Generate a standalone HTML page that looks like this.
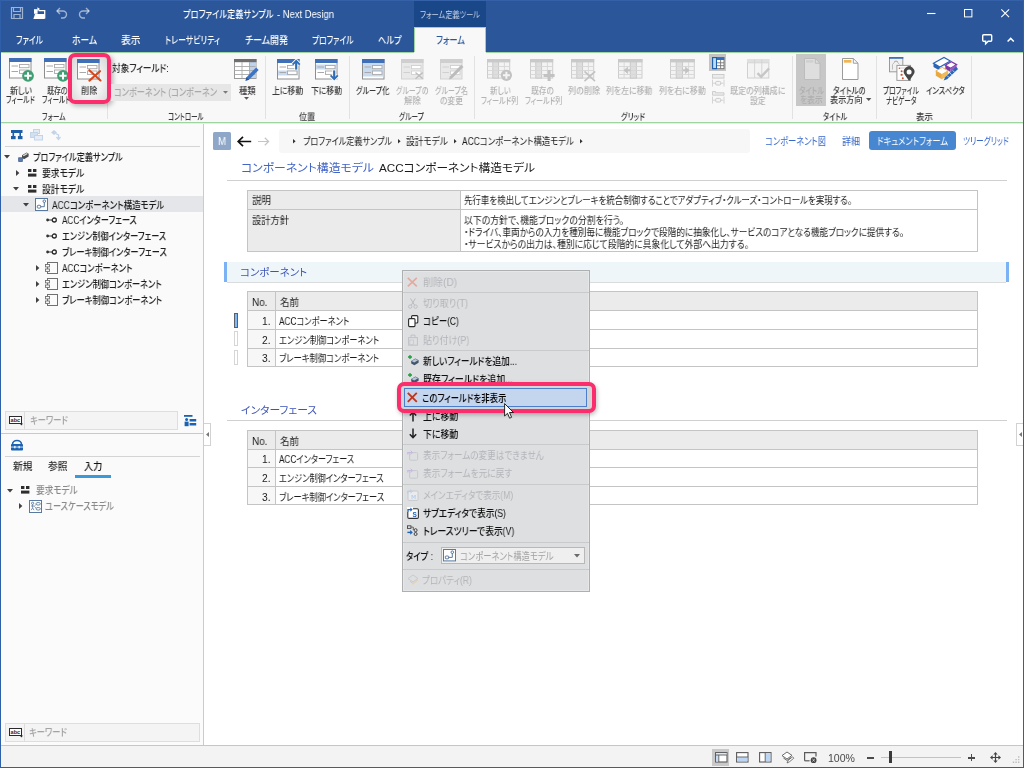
<!DOCTYPE html>
<html lang="ja"><head><meta charset="utf-8"><title>Next Design</title>
<style>
html,body{margin:0;padding:0;background:#fff;}
body{width:1024px;height:768px;overflow:hidden;font-family:"Liberation Sans","Noto Sans CJK JP",sans-serif;}
#app{position:relative;width:1024px;height:768px;overflow:hidden;background:#fff;}
#app div,#app svg,#app span.t{position:absolute;}
#app .g{left:0;top:0;width:0;height:0;}
span.t{white-space:nowrap;line-height:14px;height:14px;font-feature-settings:"palt";}
span.t>span{display:inline-block;transform-origin:0 50%;white-space:nowrap;will-change:transform;}
svg{overflow:visible;}
</style></head>
<body><div id="app">
<div class="g titlebar">
<div style="left:0px;top:0px;width:1024px;height:52px;background:#2b579a;"></div>
<div style="left:0px;top:0px;width:1024px;height:1px;background:#3461a8;"></div>
<div style="left:414px;top:1px;width:72px;height:26px;background:#1a4788;"></div>
<span class="t" style="left:182.5px;top:7.50px;font-size:10.27px;color:#ffffff;font-weight:500;"><span style="transform:scaleX(0.8003)">プロファイル定義サンプル</span></span>
<span class="t" style="left:277px;top:7.50px;font-size:10.27px;color:#ffffff;font-weight:500;"><span style="transform:scaleX(0.9166)">- Next Design</span></span>
<span class="t" style="left:420px;top:8.40px;font-size:8.88px;color:#c9d5ea;font-weight:400;"><span style="transform:scaleX(0.8098)">フォーム定義ツール</span></span>
<svg style="left:11px;top:7px;" width="12" height="12" viewBox="0 0 12 12"><path d="M0.5 0.5h11v11h-11z M2.5 0.5v4h7v-4 M3 11.5v-4h6v4" fill="none" stroke="rgba(255,255,255,.55)" stroke-width="1.2"/></svg>
<svg style="left:33.2px;top:6.6px;" width="13" height="13" viewBox="0 0 13 13"><path d="M5.5 3.6h6.2v8" fill="none" stroke="#fff" stroke-width="1.3"/><path d="M0.4 12l1.6-5h9.6v5z" fill="#fff"/><rect x="1" y="2.2" width="3.6" height="4.6" fill="#fff"/><path d="M4.4 0.2l2.6 1.9-2.6 1.9z" fill="#fff"/></svg>
<svg style="left:56px;top:7px;" width="12" height="12" viewBox="0 0 12 12"><path d="M1 4h6a3.5 3.5 0 0 1 0 7h-2" fill="none" stroke="rgba(255,255,255,.55)" stroke-width="1.4"/><path d="M4 1l-3 3 3 3" fill="none" stroke="rgba(255,255,255,.55)" stroke-width="1.4"/></svg>
<svg style="left:78px;top:7px;" width="12" height="12" viewBox="0 0 12 12"><path d="M11 4h-6a3.5 3.5 0 0 0 0 7h2" fill="none" stroke="rgba(255,255,255,.55)" stroke-width="1.4"/><path d="M8 1l3 3-3 3" fill="none" stroke="rgba(255,255,255,.55)" stroke-width="1.4"/></svg>
<svg style="left:927px;top:9px;" width="10" height="10" viewBox="0 0 10 10"><path d="M0 4.5h8.5" stroke="#fff" stroke-width="1.1"/></svg>
<svg style="left:964px;top:9px;" width="9" height="9" viewBox="0 0 9 9"><rect x="0.5" y="0.5" width="7.4" height="7.4" fill="none" stroke="#fff" stroke-width="1"/></svg>
<svg style="left:1001px;top:9px;" width="9" height="9" viewBox="0 0 9 9"><path d="M0.3 0.3l7.8 7.8M8.1 0.3l-7.8 7.8" stroke="#fff" stroke-width="1.1"/></svg>
</div>
<div class="g tabs">
<span class="t" style="left:16px;top:34.00px;font-size:10.27px;color:#ffffff;font-weight:500;"><span style="transform:scaleX(0.7592)">ファイル</span></span>
<span class="t" style="left:72px;top:34.00px;font-size:10.27px;color:#ffffff;font-weight:500;"><span style="transform:scaleX(0.8511)">ホーム</span></span>
<span class="t" style="left:120.5px;top:34.00px;font-size:10.27px;color:#ffffff;font-weight:500;"><span style="transform:scaleX(0.9498)">表示</span></span>
<span class="t" style="left:165px;top:34.00px;font-size:10.27px;color:#ffffff;font-weight:500;"><span style="transform:scaleX(0.7748)">トレーサビリティ</span></span>
<span class="t" style="left:244.5px;top:34.00px;font-size:10.27px;color:#ffffff;font-weight:500;"><span style="transform:scaleX(0.8717)">チーム開発</span></span>
<span class="t" style="left:311.5px;top:34.00px;font-size:10.27px;color:#ffffff;font-weight:500;"><span style="transform:scaleX(0.7543)">プロファイル</span></span>
<span class="t" style="left:377.5px;top:34.00px;font-size:10.27px;color:#ffffff;font-weight:500;"><span style="transform:scaleX(0.7979)">ヘルプ</span></span>
<div style="left:414px;top:27px;width:72px;height:26px;background:#f8f8f8;border:1px solid #9fd39f;border-bottom:none;box-sizing:border-box;"></div>
<span class="t" style="left:435.5px;top:34.40px;font-size:10.27px;color:#2b579a;font-weight:500;"><span style="transform:scaleX(0.8052)">フォーム</span></span>
<svg style="left:982px;top:33.8px;" width="11" height="11" viewBox="0 0 11 11"><path d="M1.6 0.8h7.2a0.9 0.9 0 0 1 0.9 0.9v4.6a0.9 0.9 0 0 1-0.9 0.9h-2.6l-2.6 2.6v-2.6h-2a0.9 0.9 0 0 1-0.9-0.9v-4.6a0.9 0.9 0 0 1 0.9-0.9z" fill="none" stroke="#fff" stroke-width="1.4"/></svg>
<svg style="left:1007px;top:37px;" width="8" height="6" viewBox="0 0 8 6"><path d="M0.6 4.6l3.1-3.2 3.1 3.2" fill="none" stroke="#fff" stroke-width="1.5"/></svg>
</div>
<div class="g ribbon">
<div style="left:0px;top:52px;width:1024px;height:71px;background:#f8f8f8;"></div>
<div style="left:0px;top:52px;width:414px;height:1px;background:#9fd39f;"></div>
<div style="left:486px;top:52px;width:538px;height:1px;background:#9fd39f;"></div>
<div style="left:0px;top:122px;width:1024px;height:1px;background:#9fd39f;"></div>
<div style="left:0px;top:123px;width:1024px;height:1px;background:#e3efe3;"></div>
<div style="left:107px;top:55.5px;width:1px;height:63.5px;background:#e2e2e2;"></div>
<div style="left:265px;top:55.5px;width:1px;height:63.5px;background:#e2e2e2;"></div>
<div style="left:349px;top:55.5px;width:1px;height:63.5px;background:#e2e2e2;"></div>
<div style="left:474px;top:55.5px;width:1px;height:63.5px;background:#e2e2e2;"></div>
<div style="left:792px;top:55.5px;width:1px;height:63.5px;background:#e2e2e2;"></div>
<div style="left:876px;top:55.5px;width:1px;height:63.5px;background:#e2e2e2;"></div>
<div style="left:971px;top:55.5px;width:1px;height:63.5px;background:#e2e2e2;"></div>
<svg style="left:9px;top:57.6px;" width="26" height="24" viewBox="0 0 26 24"><rect x="0.5" y="0.5" width="21.5" height="19.5" fill="#ffffff" stroke="#8e8e8e" stroke-width="1"/><rect x="0" y="0" width="22.5" height="4" fill="#3f6fb6"/><path d="M2.5 8h6.5M2.5 13.5h6.5" stroke="#a8a8a8" stroke-width="1"/><rect x="10.5" y="6.5" width="9.5" height="3.2" fill="#ffffff" stroke="#a8a8a8" stroke-width="0.9"/><rect x="10.5" y="12" width="9.5" height="3.4" fill="#ffffff" stroke="#a8a8a8" stroke-width="0.9"/><circle cx="19" cy="17.8" r="5.9" fill="#3f9f72"/><path d="M15.341999999999999 17.8h7.316000000000001M19 14.142v7.316000000000001" stroke="#ffffff" stroke-width="2"/></svg>
<span class="t" style="left:10px;top:84.00px;font-size:9.2px;color:#3a3a3a;font-weight:500;"><span style="transform:scaleX(0.8585)">新しい</span></span>
<span class="t" style="left:6.4px;top:93.00px;font-size:9.2px;color:#3a3a3a;font-weight:500;"><span style="transform:scaleX(0.7291)">フィールド</span></span>
<svg style="left:44px;top:57.6px;" width="26" height="24" viewBox="0 0 26 24"><rect x="0.5" y="0.5" width="21.5" height="19.5" fill="#ffffff" stroke="#8e8e8e" stroke-width="1"/><rect x="0" y="0" width="22.5" height="4" fill="#3f6fb6"/><path d="M2.5 8h6.5M2.5 13.5h6.5" stroke="#a8a8a8" stroke-width="1"/><rect x="10.5" y="6.5" width="9.5" height="3.2" fill="#ffffff" stroke="#a8a8a8" stroke-width="0.9"/><rect x="10.5" y="12" width="9.5" height="3.4" fill="#ffffff" stroke="#a8a8a8" stroke-width="0.9"/><circle cx="19" cy="17.8" r="5.9" fill="#3f9f72"/><path d="M15.341999999999999 17.8h7.316000000000001M19 14.142v7.316000000000001" stroke="#ffffff" stroke-width="2"/></svg>
<span class="t" style="left:46.5px;top:84.00px;font-size:9.2px;color:#3a3a3a;font-weight:500;"><span style="transform:scaleX(0.7527)">既存の</span></span>
<span class="t" style="left:42px;top:93.00px;font-size:9.2px;color:#3a3a3a;font-weight:500;"><span style="transform:scaleX(0.7215)">フィールド</span></span>
<div style="left:68px;top:53px;width:42.5px;height:50.5px;box-sizing:border-box;border:4px solid #fb2d6c;border-radius:7px;background:radial-gradient(ellipse at 50% 55%,#f4f4f4 45%,#dedede 85%,#cfcfcf 100%);box-shadow:2px 2px 5px rgba(0,0,0,.28);"></div>
<svg style="left:77px;top:59.2px;" width="26" height="24" viewBox="0 0 26 24"><rect x="0.5" y="0.5" width="21.5" height="19.5" fill="#ffffff" stroke="#8e8e8e" stroke-width="1"/><rect x="0" y="0" width="22.5" height="4" fill="#3f6fb6"/><path d="M2.5 8h6.5M2.5 13.5h6.5" stroke="#a8a8a8" stroke-width="1"/><rect x="10.5" y="6.5" width="9.5" height="3.2" fill="#ffffff" stroke="#a8a8a8" stroke-width="0.9"/><rect x="10.5" y="12" width="9.5" height="3.4" fill="#ffffff" stroke="#a8a8a8" stroke-width="0.9"/><path d="M12.3 11.2L23.5 21.5M23 12.2L12.4 21.6" stroke="#d8481f" stroke-width="2.1" stroke-linecap="round"/></svg>
<span class="t" style="left:80.7px;top:83.50px;font-size:9.2px;color:#3a3a3a;font-weight:500;"><span style="transform:scaleX(0.8871)">削除</span></span>
<span class="t" style="left:42px;top:110.00px;font-size:9.2px;color:#3a3a3a;font-weight:500;"><span style="transform:scaleX(0.7290)">フォーム</span></span>
<span class="t" style="left:111.5px;top:62.40px;font-size:10.49px;color:#2a2a2a;font-weight:500;"><span style="transform:scaleX(0.8223)">対象フィールド:</span></span>
<div style="left:111px;top:83.5px;width:119.5px;height:17px;background:#e6e6e6;"></div>
<span class="t" style="left:113.5px;top:86.00px;font-size:10.49px;color:#a9a9a9;font-weight:500;"><span style="transform:scaleX(0.7774)">コンポーネント (コンポーネン</span></span>
<svg style="left:222.6px;top:91px;" width="5" height="3" viewBox="0 0 5 3"><path d="M0 0h5l-2.5 2.8z" fill="#7a7a7a"/></svg>
<svg style="left:234.2px;top:59px;" width="26" height="24" viewBox="0 0 26 24"><rect x="0.5" y="0.5" width="21.5" height="19" fill="#fff" stroke="#9a9a9a"/><rect x="15.5" y="1" width="6" height="18" fill="#bdd3ee"/><rect x="0" y="0" width="22.5" height="3.2" fill="#6f6f6f"/><path d="M0.5 7.5h21M0.5 11.5h21M0.5 15.5h21M8 3v16.5M15.5 3v16.5" stroke="#a9a9a9" stroke-width="0.9" fill="none"/><path d="M11.5 21.8l1-3.6 9.6-9.8 2.6 2.6-9.7 9.7z" fill="#3b74c7"/><path d="M11.5 21.8l1-3.6 2.6 2.6z" fill="#2b5797"/></svg>
<span class="t" style="left:238.5px;top:84.30px;font-size:9.2px;color:#3a3a3a;font-weight:500;"><span style="transform:scaleX(0.8980)">種類</span></span>
<svg style="left:243.5px;top:97.3px;" width="5" height="3" viewBox="0 0 5 3"><path d="M0 0h5l-2.5 2.8z" fill="#555"/></svg>
<span class="t" style="left:168px;top:110.00px;font-size:9.2px;color:#3a3a3a;font-weight:500;"><span style="transform:scaleX(0.7041)">コントロール</span></span>
<svg style="left:276.8px;top:59.2px;" width="26" height="24" viewBox="0 0 26 24"><rect x="0.5" y="0.5" width="21.5" height="19.5" fill="#ffffff" stroke="#8e8e8e" stroke-width="1"/><rect x="1" y="11.5" width="20.5" height="5" fill="#c8daf0"/><rect x="0" y="0" width="22.5" height="4" fill="#3f6fb6"/><path d="M2.5 8h6.5M2.5 13.5h6.5" stroke="#a8a8a8" stroke-width="1"/><rect x="10.5" y="6.5" width="9.5" height="3.2" fill="#ffffff" stroke="#a8a8a8" stroke-width="0.9"/><rect x="10.5" y="12" width="9.5" height="3.4" fill="#ffffff" stroke="#a8a8a8" stroke-width="0.9"/><path d="M19.2 11v-8.4M15.6 5.6l3.6-3.8 3.6 3.8" fill="none" stroke="#fff" stroke-width="3.6"/><path d="M19.2 10.6v-8" stroke="#2f6db8" stroke-width="2.2"/><path d="M15.6 5.6l3.6-3.8 3.6 3.8" fill="none" stroke="#2f6db8" stroke-width="1.9"/></svg>
<span class="t" style="left:272.4px;top:83.50px;font-size:9.2px;color:#3a3a3a;font-weight:500;"><span style="transform:scaleX(0.8566)">上に移動</span></span>
<svg style="left:315.2px;top:59.2px;" width="26" height="24" viewBox="0 0 26 24"><rect x="0.5" y="0.5" width="21.5" height="19.5" fill="#ffffff" stroke="#8e8e8e" stroke-width="1"/><rect x="1" y="5.5" width="20.5" height="5" fill="#c8daf0"/><rect x="0" y="0" width="22.5" height="4" fill="#3f6fb6"/><path d="M2.5 8h6.5M2.5 13.5h6.5" stroke="#a8a8a8" stroke-width="1"/><rect x="10.5" y="6.5" width="9.5" height="3.2" fill="#ffffff" stroke="#a8a8a8" stroke-width="0.9"/><rect x="10.5" y="12" width="9.5" height="3.4" fill="#ffffff" stroke="#a8a8a8" stroke-width="0.9"/><path d="M19.2 11v8.6M15.6 16.4l3.6 3.8 3.6-3.8" fill="none" stroke="#fff" stroke-width="3.6"/><path d="M19.2 11.4v8" stroke="#2f6db8" stroke-width="2.2"/><path d="M15.6 16.4l3.6 3.8 3.6-3.8" fill="none" stroke="#2f6db8" stroke-width="1.9"/></svg>
<span class="t" style="left:311px;top:83.50px;font-size:9.2px;color:#3a3a3a;font-weight:500;"><span style="transform:scaleX(0.8511)">下に移動</span></span>
<span class="t" style="left:299px;top:110.00px;font-size:9.2px;color:#3a3a3a;font-weight:500;"><span style="transform:scaleX(0.8707)">位置</span></span>
<svg style="left:361.7px;top:59.2px;" width="26" height="24" viewBox="0 0 26 24"><rect x="0.5" y="0.5" width="21.5" height="19.5" fill="#ffffff" stroke="#8e8e8e" stroke-width="1"/><rect x="1" y="4" width="20.5" height="13.5" fill="#c8daf0"/><rect x="0" y="0" width="22.5" height="4" fill="#3f6fb6"/><path d="M2.5 8h6.5M2.5 13.5h6.5" stroke="#a8a8a8" stroke-width="1"/><rect x="10.5" y="6.5" width="9.5" height="3.2" fill="#ffffff" stroke="#a8a8a8" stroke-width="0.9"/><rect x="10.5" y="12" width="9.5" height="3.4" fill="#ffffff" stroke="#a8a8a8" stroke-width="0.9"/></svg>
<span class="t" style="left:356px;top:83.50px;font-size:9.2px;color:#3a3a3a;font-weight:500;"><span style="transform:scaleX(0.7779)">グループ化</span></span>
<svg style="left:400.7px;top:59.2px;" width="26" height="24" viewBox="0 0 26 24"><rect x="0.5" y="0.5" width="21.5" height="19.5" fill="#e9e9e9" stroke="#d2d2d2" stroke-width="1"/><rect x="0" y="0" width="22.5" height="4" fill="#cfcfcf"/><path d="M2.5 8h6.5M2.5 13.5h6.5" stroke="#d0d0d0" stroke-width="1"/><rect x="10.5" y="6.5" width="9.5" height="3.2" fill="#ffffff" stroke="#d0d0d0" stroke-width="0.9"/><rect x="10.5" y="12" width="9.5" height="3.4" fill="#ffffff" stroke="#d0d0d0" stroke-width="0.9"/><path d="M14.5 13.5l7.3 6.2M21.8 13.5l-7.3 6.2" stroke="#bdbdbd" stroke-width="1.4"/></svg>
<span class="t" style="left:395.8px;top:83.50px;font-size:9.2px;color:#b3b3b3;font-weight:500;"><span style="transform:scaleX(0.7605)">グループの</span></span>
<span class="t" style="left:404px;top:93.50px;font-size:9.2px;color:#b3b3b3;font-weight:500;"><span style="transform:scaleX(0.9143)">解除</span></span>
<svg style="left:440px;top:59.2px;" width="26" height="24" viewBox="0 0 26 24"><rect x="0.5" y="0.5" width="21.5" height="19.5" fill="#e9e9e9" stroke="#d2d2d2" stroke-width="1"/><rect x="0" y="0" width="22.5" height="4" fill="#cfcfcf"/><path d="M2.5 8h6.5M2.5 13.5h6.5" stroke="#d0d0d0" stroke-width="1"/><rect x="10.5" y="6.5" width="9.5" height="3.2" fill="#ffffff" stroke="#d0d0d0" stroke-width="0.9"/><rect x="10.5" y="12" width="9.5" height="3.4" fill="#ffffff" stroke="#d0d0d0" stroke-width="0.9"/><path d="M9 20.5l0.8-3 11.5-11.8 2.2 2.2-11.6 11.7z" fill="#bcbcbc"/></svg>
<span class="t" style="left:434.5px;top:83.50px;font-size:9.2px;color:#b3b3b3;font-weight:500;"><span style="transform:scaleX(0.7687)">グループ名</span></span>
<span class="t" style="left:440px;top:93.50px;font-size:9.2px;color:#b3b3b3;font-weight:500;"><span style="transform:scaleX(0.8445)">の変更</span></span>
<span class="t" style="left:399px;top:110.00px;font-size:9.2px;color:#3a3a3a;font-weight:500;"><span style="transform:scaleX(0.7380)">グループ</span></span>
<svg style="left:487px;top:58.7px;" width="28" height="24" viewBox="0 0 28 24"><rect x="0.5" y="0.5" width="22.2" height="18.6" fill="#f3f3f3" stroke="#cdcdcd"/><rect x="5.80" y="0.5" width="5.80" height="18.6" fill="#dedede" stroke="#c6c6c6" stroke-width="0.9"/><rect x="0" y="0" width="23.2" height="3.4" fill="#c9c9c9"/><path d="M0.5 7.5h22.2M0.5 11.5h22.2M0.5 15.5h22.2M17.40 3v16.1" stroke="#d6d6d6" stroke-width="0.9" fill="none"/><circle cx="19.4" cy="16.3" r="5.6" fill="#c2c2c2"/><path d="M15.9 16.3h7M19.4 12.8v7" stroke="#f4f4f4" stroke-width="2"/></svg>
<span class="t" style="left:489.5px;top:83.50px;font-size:9.2px;color:#b3b3b3;font-weight:500;"><span style="transform:scaleX(0.8117)">新しい</span></span>
<span class="t" style="left:481.3px;top:93.50px;font-size:9.2px;color:#b3b3b3;font-weight:500;"><span style="transform:scaleX(0.7641)">フィールド列</span></span>
<svg style="left:530.3px;top:58.7px;" width="28" height="24" viewBox="0 0 28 24"><rect x="0.5" y="0.5" width="22.2" height="18.6" fill="#f3f3f3" stroke="#cdcdcd"/><rect x="5.80" y="0.5" width="5.80" height="18.6" fill="#dedede" stroke="#c6c6c6" stroke-width="0.9"/><rect x="0" y="0" width="23.2" height="3.4" fill="#c9c9c9"/><path d="M0.5 7.5h22.2M0.5 11.5h22.2M0.5 15.5h22.2M17.40 3v16.1" stroke="#d6d6d6" stroke-width="0.9" fill="none"/><path d="M13.6 16.4h11M19.1 10.9v11" stroke="#c2c2c2" stroke-width="3"/></svg>
<span class="t" style="left:531px;top:83.50px;font-size:9.2px;color:#b3b3b3;font-weight:500;"><span style="transform:scaleX(0.8372)">既存の</span></span>
<span class="t" style="left:524.8px;top:93.50px;font-size:9.2px;color:#b3b3b3;font-weight:500;"><span style="transform:scaleX(0.7641)">フィールド列</span></span>
<svg style="left:571.2px;top:58.7px;" width="28" height="24" viewBox="0 0 28 24"><rect x="0.5" y="0.5" width="22.2" height="18.6" fill="#f3f3f3" stroke="#cdcdcd"/><rect x="5.80" y="0.5" width="5.80" height="18.6" fill="#dedede" stroke="#c6c6c6" stroke-width="0.9"/><rect x="0" y="0" width="23.2" height="3.4" fill="#c9c9c9"/><path d="M0.5 7.5h22.2M0.5 11.5h22.2M0.5 15.5h22.2M17.40 3v16.1" stroke="#d6d6d6" stroke-width="0.9" fill="none"/><path d="M13.5 12.3l10.5 9.8M24.2 12.3l-10.7 9.8" stroke="#c2c2c2" stroke-width="1.6"/></svg>
<span class="t" style="left:568px;top:83.50px;font-size:9.2px;color:#b3b3b3;font-weight:500;"><span style="transform:scaleX(0.8786)">列の削除</span></span>
<svg style="left:617.8px;top:58.7px;" width="28" height="24" viewBox="0 0 28 24"><rect x="0.5" y="0.5" width="23.5" height="18.6" fill="#f3f3f3" stroke="#cdcdcd"/><rect x="12.25" y="0.5" width="6.12" height="18.6" fill="#dedede" stroke="#c6c6c6" stroke-width="0.9"/><rect x="0" y="0" width="24.5" height="3.4" fill="#c9c9c9"/><path d="M0.5 7.5h23.5M0.5 11.5h23.5M0.5 15.5h23.5M6.12 3v16.1" stroke="#d6d6d6" stroke-width="0.9" fill="none"/><path d="M6.5 11.3h6" stroke="#c2c2c2" stroke-width="2"/><path d="M9.6 8.2l-3.4 3.1 3.4 3.1z" fill="#c2c2c2" stroke="#c2c2c2" stroke-width="0.8"/></svg>
<span class="t" style="left:606.3px;top:83.50px;font-size:9.2px;color:#b3b3b3;font-weight:500;"><span style="transform:scaleX(0.8543)">列を左に移動</span></span>
<svg style="left:669.6px;top:58.7px;" width="28" height="24" viewBox="0 0 28 24"><rect x="0.5" y="0.5" width="23.8" height="18.6" fill="#f3f3f3" stroke="#cdcdcd"/><rect x="6.20" y="0.5" width="6.20" height="18.6" fill="#dedede" stroke="#c6c6c6" stroke-width="0.9"/><rect x="0" y="0" width="24.8" height="3.4" fill="#c9c9c9"/><path d="M0.5 7.5h23.8M0.5 11.5h23.8M0.5 15.5h23.8M18.60 3v16.1" stroke="#d6d6d6" stroke-width="0.9" fill="none"/><path d="M12.6 11.3h6" stroke="#c2c2c2" stroke-width="2"/><path d="M15.6 8.2l3.4 3.1-3.4 3.1z" fill="#c2c2c2" stroke="#c2c2c2" stroke-width="0.8"/></svg>
<span class="t" style="left:659px;top:83.50px;font-size:9.2px;color:#b3b3b3;font-weight:500;"><span style="transform:scaleX(0.8636)">列を右に移動</span></span>
<div style="left:709.3px;top:54px;width:17.2px;height:17px;background:#c4c4c4;"></div>
<svg style="left:711.6px;top:56.5px;" width="13" height="13" viewBox="0 0 13 13"><rect x="0.5" y="0.5" width="11.5" height="11.2" fill="#fff" stroke="#6a6a6a" stroke-width="0.9"/><rect x="0.6" y="0.6" width="3.9" height="11" fill="#bcdcf7" stroke="#1f5ea8" stroke-width="1.1"/><rect x="5" y="0.4" width="7.2" height="2.6" fill="#2e6fc0"/><path d="M5 5.8h7M5 8.7h7M8.6 3v8.5" stroke="#777" stroke-width="0.9" fill="none"/></svg>
<svg style="left:711.6px;top:74px;" width="13" height="13" viewBox="0 0 13 13"><rect x="0.5" y="0.5" width="11.5" height="3.6" fill="#ececec" stroke="#c9c9c9" stroke-width="0.9"/><path d="M0.5 5.6v7M12 5.6v7M1 9.2h10.5" stroke="#cfcfcf" stroke-width="0.9" fill="none"/><rect x="3.7" y="7.4" width="5" height="3.6" rx="1" fill="#f4f4f4" stroke="#c6c6c6" stroke-width="0.9"/></svg>
<svg style="left:711.6px;top:91px;" width="13" height="13" viewBox="0 0 13 13"><path d="M0.5 4.2v-3.7h3v1.3h8.5v2.4z" fill="#ececec" stroke="#c9c9c9" stroke-width="0.9"/><path d="M0.5 5.6v7M12 5.6v7M1 9.2h10.5" stroke="#cfcfcf" stroke-width="0.9" fill="none"/><rect x="3.7" y="7.4" width="5" height="3.6" rx="1" fill="#f4f4f4" stroke="#c6c6c6" stroke-width="0.9"/></svg>
<svg style="left:746.8px;top:59.3px;" width="26" height="22" viewBox="0 0 26 22"><rect x="0.5" y="0.5" width="21.3" height="18.5" fill="#f4f4f4" stroke="#d0d0d0"/><rect x="0" y="0" width="22.3" height="3.6" fill="#e0e0e0"/><path d="M7.6 0.5v18.5M14.8 0.5v18.5M0.5 3.8h21" stroke="#d2d2d2" stroke-width="0.9" fill="none"/><path d="M10.5 14.2l3.6 3.6 8-8.4" fill="none" stroke="#c6c6c6" stroke-width="2.4"/></svg>
<span class="t" style="left:730px;top:83.50px;font-size:9.2px;color:#b3b3b3;font-weight:500;"><span style="transform:scaleX(0.8705)">既定の列構成に</span></span>
<span class="t" style="left:750px;top:93.50px;font-size:9.2px;color:#b3b3b3;font-weight:500;"><span style="transform:scaleX(0.8490)">設定</span></span>
<span class="t" style="left:621px;top:110.00px;font-size:9.2px;color:#3a3a3a;font-weight:500;"><span style="transform:scaleX(0.7905)">グリッド</span></span>
<div style="left:796.3px;top:54px;width:30px;height:52px;background:#c7c7c7;"></div>
<svg style="left:803.5px;top:57.6px;" width="18" height="23" viewBox="0 0 18 23"><path d="M0.5 0.5h10.8l4.7 4.7v16.3h-15.5z" fill="#dedede" stroke="#bcbcbc"/><path d="M11.3 0.5v4.7h4.7" fill="none" stroke="#bcbcbc"/><rect x="2" y="2.2" width="7.4" height="2.4" fill="#cfcfcf"/></svg>
<span class="t" style="left:798.5px;top:83.50px;font-size:9.2px;color:#aeaeae;font-weight:500;"><span style="transform:scaleX(0.7862)">タイトル</span></span>
<span class="t" style="left:800.3px;top:93.30px;font-size:9.2px;color:#aeaeae;font-weight:500;"><span style="transform:scaleX(0.8377)">を表示</span></span>
<svg style="left:842px;top:57.6px;" width="18" height="23" viewBox="0 0 18 23"><path d="M0.5 0.5h10.8l4.7 4.7v16.3h-15.5z" fill="#fff" stroke="#9b9b9b"/><path d="M11.3 0.5v4.7h4.7" fill="none" stroke="#9b9b9b"/><rect x="1.8" y="2" width="7.6" height="2.7" fill="#f2b552"/></svg>
<span class="t" style="left:833px;top:83.50px;font-size:9.2px;color:#3a3a3a;font-weight:500;"><span style="transform:scaleX(0.8018)">タイトルの</span></span>
<span class="t" style="left:830px;top:93.30px;font-size:9.2px;color:#3a3a3a;font-weight:500;"><span style="transform:scaleX(0.8844)">表示方向</span></span>
<svg style="left:866.3px;top:98px;" width="6" height="4" viewBox="0 0 6 4"><path d="M0 0h5.4l-2.7 3z" fill="#555"/></svg>
<span class="t" style="left:822.8px;top:110.00px;font-size:9.2px;color:#3a3a3a;font-weight:500;"><span style="transform:scaleX(0.7611)">タイトル</span></span>
<svg style="left:889.4px;top:57px;" width="27" height="25" viewBox="0 0 27 25"><rect x="0.5" y="0.5" width="13.3" height="14.3" fill="#f1f1f1" stroke="#9a9a9a"/><rect x="0" y="0" width="14.3" height="1.8" fill="#3f6fb6"/><path d="M7 3.5l-3.5 4M7 3.5l3.5 4M3.5 7.5v5M5 4.5h4" stroke="#b5b5b5" stroke-width="0.9" fill="none"/><rect x="7.9" y="8.4" width="13.6" height="15" fill="#fff" stroke="#9a9a9a"/><path d="M11 11h6M11 18h3" stroke="#c9c9c9" stroke-width="0.9"/><circle cx="12.6" cy="14.3" r="1" fill="#e0492a"/><circle cx="12.6" cy="17.7" r="1" fill="#e0492a"/><circle cx="13.8" cy="21.2" r="1" fill="#e0492a"/><circle cx="10.4" cy="11.2" r="0.8" fill="#e0492a"/><path d="M20.1 24l-4.3-6.3a5.3 5.3 0 1 1 8.6 0z" fill="#474747"/><circle cx="20.1" cy="14.9" r="2.5" fill="#fff"/></svg>
<span class="t" style="left:883.2px;top:84.00px;font-size:9.2px;color:#3a3a3a;font-weight:500;"><span style="transform:scaleX(0.7274)">プロファイル</span></span>
<span class="t" style="left:886.4px;top:93.50px;font-size:9.2px;color:#3a3a3a;font-weight:500;"><span style="transform:scaleX(0.7039)">ナビゲータ</span></span>
<svg style="left:933px;top:57px;" width="27" height="25" viewBox="0 0 27 25"><path d="M0.5 6.2l10.5-5.7 6.3 3.6-10.4 5.9z" fill="#fff" stroke="#2a66b5" stroke-width="1.2"/><path d="M0.5 6.2v3.7l6.4 3.8v-3.7z" fill="#2a66b5"/><path d="M12.3 8.3l6-3.6 5.3 2.9-6 3.6z" fill="#fff" stroke="#7d3aa8" stroke-width="1.2"/><path d="M12.3 8.3v3.6l5.3 3v-3.7z" fill="#7d3aa8"/><path d="M17.6 11.2l6-3.6v3.4l-6 3.9z" fill="#9b59c4"/><path d="M2.8 14l6.4-3.6 6 3.4-6.3 3.7z" fill="#fff" stroke="#eeb04e" stroke-width="1"/><path d="M2.8 14v4.7l6.1 3.5v-4.7z" fill="#e9a840"/><path d="M8.9 17.5l6.3-3.7v4.6l-6.3 3.8z" fill="#f0b95c"/><path d="M10.6 23.6l1.5-3.4 11-10.4 2 2.1-11 10.4z" fill="#2a66b5"/><path d="M14.2 18.6l1.6 1.8M17 16l1.6 1.8M19.8 13.4l1.6 1.8" stroke="#fff" stroke-width="0.7"/></svg>
<span class="t" style="left:926px;top:84.00px;font-size:9.2px;color:#3a3a3a;font-weight:500;"><span style="transform:scaleX(0.7926)">インスペクタ</span></span>
<span class="t" style="left:915.8px;top:110.00px;font-size:9.2px;color:#3a3a3a;font-weight:500;"><span style="transform:scaleX(0.9143)">表示</span></span>
</div>
<div class="g side">
<div style="left:0px;top:124px;width:203px;height:622px;background:#fafafa;"></div>
<div style="left:203px;top:124px;width:1px;height:622px;background:#cbcbcb;"></div>
<svg style="left:11px;top:130px;" width="12" height="10" viewBox="0 0 12 10"><rect x="0" y="0" width="11.5" height="3" fill="#1f5fa8"/><path d="M2.3 3v4M9.2 3v4" stroke="#1f5fa8" stroke-width="1.6"/><rect x="0" y="6" width="4.6" height="3.2" fill="#1f5fa8"/><rect x="6.9" y="6" width="4.6" height="3.2" fill="#1f5fa8"/></svg>
<svg style="left:30px;top:129px;" width="13" height="12" viewBox="0 0 13 12"><rect x="3.5" y="0.5" width="6" height="4" fill="#e3ebf5" stroke="#c3d3e8"/><rect x="0.5" y="3.5" width="7" height="5" fill="#d5e0ef" stroke="#c3d3e8"/><rect x="4.5" y="6.5" width="8" height="4.5" fill="#e6edf6" stroke="#c3d3e8"/></svg>
<svg style="left:50px;top:129px;" width="12" height="12" viewBox="0 0 12 12"><path d="M1 3.5l3-2.5 3 2.5-3 2.5z" fill="#c3d3e8"/><path d="M5.5 4.5l3 1.5v3" fill="none" stroke="#c3d3e8" stroke-width="1.3"/><path d="M6.5 8l2 2.5 2-2.5" fill="none" stroke="#c3d3e8" stroke-width="1.3"/></svg>
<div style="left:5px;top:146px;width:195px;height:1px;background:#d4d4d4;"></div>
<div style="left:1px;top:196px;width:202px;height:16px;background:#e4e6e9;"></div>
<svg style="left:4px;top:155.3px;" width="6" height="4" viewBox="0 0 6 4"><path d="M0 0h6l-3 3.4z" fill="#404040"/></svg>
<svg style="left:17.5px;top:151.8px;" width="11" height="10" viewBox="0 0 11 10"><path d="M4 3.2l4.6-2.7 2 1.3v2.6l-4.6 2.8-2-1.4z" fill="#4a4a4a"/><path d="M4.6 3.4l4-2.3 1.2 0.8-4 2.4z" fill="#d9d9d9"/><rect x="0.7" y="5.8" width="3.6" height="3.6" fill="#5f7fb0" stroke="#3d5a8a" stroke-width="0.8"/></svg>
<span class="t" style="left:32.7px;top:150.80px;font-size:10.27px;color:#1c1c1c;font-weight:500;"><span style="transform:scaleX(0.7933)">プロファイル定義サンプル</span></span>
<svg style="left:15.8px;top:169.70000000000002px;" width="4" height="6" viewBox="0 0 4 6"><path d="M0 0v6l3.4-3z" fill="#404040"/></svg>
<svg style="left:27.8px;top:168.70000000000002px;" width="9" height="8" viewBox="0 0 9 8"><rect x="0" y="0" width="3.4" height="3" fill="#2e2e2e"/><rect x="5" y="0" width="3.4" height="3" fill="#2e2e2e"/><rect x="0" y="4.6" width="8.4" height="3" fill="#2e2e2e"/></svg>
<span class="t" style="left:42.4px;top:166.70px;font-size:10.27px;color:#1c1c1c;font-weight:500;"><span style="transform:scaleX(0.8525)">要求モデル</span></span>
<svg style="left:13px;top:187.10000000000002px;" width="6" height="4" viewBox="0 0 6 4"><path d="M0 0h6l-3 3.4z" fill="#404040"/></svg>
<svg style="left:27.8px;top:184.60000000000002px;" width="9" height="8" viewBox="0 0 9 8"><rect x="0" y="0" width="3.4" height="3" fill="#2e2e2e"/><rect x="5" y="0" width="3.4" height="3" fill="#2e2e2e"/><rect x="0" y="4.6" width="8.4" height="3" fill="#2e2e2e"/></svg>
<span class="t" style="left:42.4px;top:182.60px;font-size:10.27px;color:#1c1c1c;font-weight:500;"><span style="transform:scaleX(0.8525)">設計モデル</span></span>
<svg style="left:22.6px;top:203.0px;" width="6" height="4" viewBox="0 0 6 4"><path d="M0 0h6l-3 3.4z" fill="#404040"/></svg>
<svg style="left:35.2px;top:198.0px;" width="13" height="13" viewBox="0 0 13 13"><rect x="0.5" y="0.5" width="12" height="12" fill="#fff" stroke="#587aa0"/><rect x="2.3" y="7.3" width="3.4" height="2.8" rx="0.8" fill="none" stroke="#4b6c93" stroke-width="0.9"/><circle cx="9.3" cy="3.2" r="1.3" fill="none" stroke="#4b6c93" stroke-width="0.9"/><path d="M5.7 8.7h3.6v-4.2" fill="none" stroke="#4b6c93" stroke-width="0.9"/></svg>
<span class="t" style="left:52.3px;top:198.50px;font-size:10.27px;color:#1c1c1c;font-weight:500;"><span style="transform:scaleX(0.8202)">ACCコンポーネント構造モデル</span></span>
<svg style="left:46px;top:217.4px;" width="12" height="6" viewBox="0 0 12 6"><circle cx="1.6" cy="3" r="1.4" fill="#333"/><path d="M2 3h4" stroke="#333" stroke-width="1"/><circle cx="8.3" cy="3" r="2" fill="#fff" stroke="#2a2a2a" stroke-width="1.3"/></svg>
<span class="t" style="left:61.8px;top:214.40px;font-size:10.27px;color:#1c1c1c;font-weight:500;"><span style="transform:scaleX(0.7959)">ACCインターフェース</span></span>
<svg style="left:46px;top:233.3px;" width="12" height="6" viewBox="0 0 12 6"><circle cx="1.6" cy="3" r="1.4" fill="#333"/><path d="M2 3h4" stroke="#333" stroke-width="1"/><circle cx="8.3" cy="3" r="2" fill="#fff" stroke="#2a2a2a" stroke-width="1.3"/></svg>
<span class="t" style="left:61.8px;top:230.30px;font-size:10.27px;color:#1c1c1c;font-weight:500;"><span style="transform:scaleX(0.7949)">エンジン制御インターフェース</span></span>
<svg style="left:46px;top:249.20000000000002px;" width="12" height="6" viewBox="0 0 12 6"><circle cx="1.6" cy="3" r="1.4" fill="#333"/><path d="M2 3h4" stroke="#333" stroke-width="1"/><circle cx="8.3" cy="3" r="2" fill="#fff" stroke="#2a2a2a" stroke-width="1.3"/></svg>
<span class="t" style="left:61.8px;top:246.20px;font-size:10.27px;color:#1c1c1c;font-weight:500;"><span style="transform:scaleX(0.8024)">ブレーキ制御インターフェース</span></span>
<svg style="left:35.5px;top:265.1px;" width="4" height="6" viewBox="0 0 4 6"><path d="M0 0v6l3.4-3z" fill="#404040"/></svg>
<svg style="left:44.6px;top:262.1px;" width="13" height="12" viewBox="0 0 13 12"><rect x="2.5" y="0.5" width="10" height="11" fill="#fbfbfb" stroke="#707070"/><rect x="0.5" y="2.5" width="4" height="2.4" fill="#fbfbfb" stroke="#707070" stroke-width="0.9"/><rect x="0.5" y="7" width="4" height="2.4" fill="#fbfbfb" stroke="#707070" stroke-width="0.9"/></svg>
<span class="t" style="left:61.8px;top:262.10px;font-size:10.27px;color:#1c1c1c;font-weight:500;"><span style="transform:scaleX(0.8064)">ACCコンポーネント</span></span>
<svg style="left:35.5px;top:281.0px;" width="4" height="6" viewBox="0 0 4 6"><path d="M0 0v6l3.4-3z" fill="#404040"/></svg>
<svg style="left:44.6px;top:278.0px;" width="13" height="12" viewBox="0 0 13 12"><rect x="2.5" y="0.5" width="10" height="11" fill="#fbfbfb" stroke="#707070"/><rect x="0.5" y="2.5" width="4" height="2.4" fill="#fbfbfb" stroke="#707070" stroke-width="0.9"/><rect x="0.5" y="7" width="4" height="2.4" fill="#fbfbfb" stroke="#707070" stroke-width="0.9"/></svg>
<span class="t" style="left:61.8px;top:278.00px;font-size:10.27px;color:#1c1c1c;font-weight:500;"><span style="transform:scaleX(0.8014)">エンジン制御コンポーネント</span></span>
<svg style="left:35.5px;top:296.9px;" width="4" height="6" viewBox="0 0 4 6"><path d="M0 0v6l3.4-3z" fill="#404040"/></svg>
<svg style="left:44.6px;top:293.9px;" width="13" height="12" viewBox="0 0 13 12"><rect x="2.5" y="0.5" width="10" height="11" fill="#fbfbfb" stroke="#707070"/><rect x="0.5" y="2.5" width="4" height="2.4" fill="#fbfbfb" stroke="#707070" stroke-width="0.9"/><rect x="0.5" y="7" width="4" height="2.4" fill="#fbfbfb" stroke="#707070" stroke-width="0.9"/></svg>
<span class="t" style="left:61.8px;top:293.90px;font-size:10.27px;color:#1c1c1c;font-weight:500;"><span style="transform:scaleX(0.8078)">ブレーキ制御コンポーネント</span></span>
<div style="left:5px;top:410.5px;width:172.5px;height:19px;background:#f4f4f4;box-sizing:border-box;border:1px solid #dedede;"></div>
<div style="left:24px;top:411.5px;width:1px;height:17px;background:#dcdcdc;"></div>
<svg style="left:9px;top:416.0px;" width="14" height="10" viewBox="0 0 14 10"><rect x="0.5" y="0.5" width="12" height="7" fill="#fff" stroke="#2a2a2a" stroke-width="1"/><text x="1.6" y="5.9" font-size="5.6" font-weight="700" fill="#2a2a2a" font-family="Liberation Sans,sans-serif" textLength="9.6" lengthAdjust="spacingAndGlyphs">abc</text><path d="M10.8 7.6h3.2l-1.6 2z" fill="#2a2a2a"/></svg>
<span class="t" style="left:29.5px;top:414.00px;font-size:10.27px;color:#a3a3a3;font-weight:500;"><span style="transform:scaleX(0.8066)">キーワード</span></span>
<svg style="left:184px;top:414.5px;" width="13" height="12" viewBox="0 0 13 12"><rect x="0" y="0" width="8.5" height="1.8" fill="#1b63b2"/><circle cx="2.6" cy="4.6" r="1.5" fill="#1b63b2"/><rect x="0.6" y="6.6" width="4" height="4.6" fill="#1b63b2"/><rect x="5.6" y="4" width="6.6" height="2.5" fill="#1b63b2"/><rect x="5.6" y="8" width="6.6" height="2.5" fill="#1b63b2"/></svg>
<div style="left:1px;top:432.5px;width:202px;height:1.5px;background:#c9c9c9;"></div>
<svg style="left:11px;top:440px;" width="12" height="11" viewBox="0 0 12 11"><path d="M1.5 4.5a4.5 4 0 0 1 9 0" fill="none" stroke="#1b63b2" stroke-width="1.6"/><rect x="0" y="4" width="12" height="6.6" rx="1" fill="#1b63b2"/><rect x="0" y="6.6" width="12" height="0.9" fill="#dfe9f5"/><rect x="3" y="5.9" width="1.6" height="2.4" fill="#dfe9f5"/><rect x="7.4" y="5.9" width="1.6" height="2.4" fill="#dfe9f5"/></svg>
<div style="left:5px;top:456px;width:195px;height:1px;background:#d4d4d4;"></div>
<span class="t" style="left:12.5px;top:460.00px;font-size:10.27px;color:#2a2a2a;font-weight:500;"><span style="transform:scaleX(0.9498)">新規</span></span>
<span class="t" style="left:48px;top:460.00px;font-size:10.27px;color:#2a2a2a;font-weight:500;"><span style="transform:scaleX(0.9498)">参照</span></span>
<span class="t" style="left:83.8px;top:460.00px;font-size:10.27px;color:#111;font-weight:500;"><span style="transform:scaleX(0.8865)">入力</span></span>
<div style="left:75px;top:475.2px;width:35.5px;height:2.6px;background:#3a9ad9;"></div>
<div style="left:1px;top:480px;width:202px;height:265px;background:#fbfbfb;"></div>
<svg style="left:6.5px;top:488.8px;" width="6" height="4" viewBox="0 0 6 4"><path d="M0 0h6l-3 3.4z" fill="#404040"/></svg>
<svg style="left:21.3px;top:486.3px;" width="9" height="8" viewBox="0 0 9 8"><rect x="0" y="0" width="3.4" height="3" fill="#2e2e2e"/><rect x="5" y="0" width="3.4" height="3" fill="#2e2e2e"/><rect x="0" y="4.6" width="8.4" height="3" fill="#2e2e2e"/></svg>
<span class="t" style="left:36.3px;top:484.30px;font-size:10.27px;color:#8a8a8a;font-weight:500;"><span style="transform:scaleX(0.8424)">要求モデル</span></span>
<svg style="left:19.0px;top:503px;" width="4" height="6" viewBox="0 0 4 6"><path d="M0 0v6l3.4-3z" fill="#404040"/></svg>
<svg style="left:28.8px;top:499.5px;" width="13" height="13" viewBox="0 0 13 13"><rect x="0.5" y="0.5" width="12" height="12" fill="#fff" stroke="#587aa0"/><circle cx="3.6" cy="3.3" r="1.1" fill="none" stroke="#4b6c93" stroke-width="0.8"/><path d="M3.6 4.6v3.2M2 6h3.2M3.6 7.8l-1.4 2.4M3.6 7.8l1.4 2.4" stroke="#4b6c93" stroke-width="0.7" fill="none"/><ellipse cx="9.2" cy="3.8" rx="2.2" ry="1.3" fill="none" stroke="#4b6c93" stroke-width="0.8"/><ellipse cx="9.2" cy="8.8" rx="2.2" ry="1.3" fill="none" stroke="#4b6c93" stroke-width="0.8"/><path d="M5.4 6l1.8-1.6M5.4 6.4l1.8 1.8" stroke="#4b6c93" stroke-width="0.6"/></svg>
<span class="t" style="left:45px;top:500.00px;font-size:10.27px;color:#8a8a8a;font-weight:500;"><span style="transform:scaleX(0.7977)">ユースケースモデル</span></span>
<div style="left:4.5px;top:722.5px;width:195px;height:19px;background:#f4f4f4;box-sizing:border-box;border:1px solid #dedede;"></div>
<div style="left:23.5px;top:723.5px;width:1px;height:17px;background:#dcdcdc;"></div>
<svg style="left:8.5px;top:728.0px;" width="14" height="10" viewBox="0 0 14 10"><rect x="0.5" y="0.5" width="12" height="7" fill="#fff" stroke="#2a2a2a" stroke-width="1"/><text x="1.6" y="5.9" font-size="5.6" font-weight="700" fill="#2a2a2a" font-family="Liberation Sans,sans-serif" textLength="9.6" lengthAdjust="spacingAndGlyphs">abc</text><path d="M10.8 7.6h3.2l-1.6 2z" fill="#2a2a2a"/></svg>
<span class="t" style="left:29.0px;top:726.00px;font-size:10.27px;color:#a3a3a3;font-weight:500;"><span style="transform:scaleX(0.8066)">キーワード</span></span>
<div style="left:203.5px;top:422.5px;width:7px;height:23.5px;background:#ffffff;box-sizing:border-box;border:1px solid #d2d2d2;border-left:none;"></div>
<svg style="left:205.5px;top:431.5px;" width="3" height="5" viewBox="0 0 3 5"><path d="M3 0v5l-3-2.5z" fill="#777"/></svg>
</div>
<div class="g main">
<div style="left:213px;top:131.5px;width:18px;height:18px;background:#8ea6c8;border-radius:1.5px;"></div>
<span class="t" style="left:218px;top:134.50px;font-size:10.27px;color:#ffffff;font-weight:400;"><span style="transform:scaleX(0.9343)">M</span></span>
<svg style="left:237px;top:136px;" width="15" height="11" viewBox="0 0 15 11"><path d="M1.2 5.5h13M6 0.8l-4.8 4.7 4.8 4.7" fill="none" stroke="#111" stroke-width="1.7"/></svg>
<svg style="left:258px;top:137px;" width="12" height="9" viewBox="0 0 12 9"><path d="M0 4.5h10.5M6.8 0.8l3.8 3.7-3.8 3.7" fill="none" stroke="#c4c4c4" stroke-width="1.2"/></svg>
<div style="left:278.6px;top:129.4px;width:471.4px;height:23.2px;background:#f7f7f7;border-radius:3px;"></div>
<svg style="left:292.8px;top:139.10000000000002px;" width="3" height="5" viewBox="0 0 3 5"><path d="M0 0v4.4l2.6-2.2z" fill="#333"/></svg>
<span class="t" style="left:303px;top:135.00px;font-size:10.06px;color:#1c1c1c;font-weight:400;"><span style="transform:scaleX(0.8043)">プロファイル定義サンプル</span></span>
<svg style="left:398.2px;top:139.10000000000002px;" width="3" height="5" viewBox="0 0 3 5"><path d="M0 0v4.4l2.6-2.2z" fill="#333"/></svg>
<span class="t" style="left:406px;top:135.00px;font-size:10.06px;color:#1c1c1c;font-weight:400;"><span style="transform:scaleX(0.8668)">設計モデル</span></span>
<svg style="left:454.2px;top:139.10000000000002px;" width="3" height="5" viewBox="0 0 3 5"><path d="M0 0v4.4l2.6-2.2z" fill="#333"/></svg>
<span class="t" style="left:462px;top:135.00px;font-size:10.06px;color:#1c1c1c;font-weight:400;"><span style="transform:scaleX(0.8358)">ACCコンポーネント構造モデル</span></span>
<svg style="left:580.2px;top:139.10000000000002px;" width="3" height="5" viewBox="0 0 3 5"><path d="M0 0v4.4l2.6-2.2z" fill="#333"/></svg>
<span class="t" style="left:765px;top:135.00px;font-size:10.27px;color:#3868c8;font-weight:400;"><span style="transform:scaleX(0.8025)">コンポーネント図</span></span>
<span class="t" style="left:842px;top:135.00px;font-size:10.27px;color:#3868c8;font-weight:400;"><span style="transform:scaleX(0.8767)">詳細</span></span>
<div style="left:869px;top:131px;width:86.5px;height:18.8px;background:#4787d2;border-radius:3px;"></div>
<span class="t" style="left:877px;top:135.00px;font-size:10.27px;color:#ffffff;font-weight:400;"><span style="transform:scaleX(0.8030)">ドキュメントフォーム</span></span>
<span class="t" style="left:963.4px;top:135.00px;font-size:10.27px;color:#3868c8;font-weight:400;"><span style="transform:scaleX(0.7416)">ツリーグリッド</span></span>
<span class="t" style="left:240.6px;top:159.00px;font-size:11.34px;color:#4264c4;font-weight:400;line-height:18px;height:18px;"><span style="transform:scaleX(1.0458)">コンポーネント構造モデル</span></span>
<span class="t" style="left:379px;top:159.00px;font-size:11.34px;color:#1a1a1a;font-weight:400;line-height:18px;height:18px;"><span style="transform:scaleX(1.0325)">ACCコンポーネント構造モデル</span></span>
<div style="left:227px;top:180px;width:780px;height:1px;background:#d0d0d0;"></div>
<div style="left:247px;top:190px;width:731px;height:62px;background:#ffffff;box-sizing:border-box;border:1px solid #c4c4c4;"></div>
<div style="left:248px;top:191px;width:212px;height:60px;background:#ebebeb;"></div>
<div style="left:460px;top:190px;width:1px;height:62px;background:#c4c4c4;"></div>
<div style="left:247px;top:209px;width:731px;height:1px;background:#c4c4c4;"></div>
<span class="t" style="left:252px;top:193.80px;font-size:10.06px;color:#1c1c1c;font-weight:400;"><span style="transform:scaleX(0.9448)">説明</span></span>
<span class="t" style="left:252px;top:214.00px;font-size:10.06px;color:#1c1c1c;font-weight:400;"><span style="transform:scaleX(0.9203)">設計方針</span></span>
<span class="t" style="left:464px;top:193.80px;font-size:10.06px;color:#1c1c1c;font-weight:400;"><span style="transform:scaleX(0.8406)">先行車を検出してエンジンとブレーキを統合制御することでアダプティブ・クルーズ・コントロールを実現する。</span></span>
<span class="t" style="left:464px;top:214.00px;font-size:10.06px;color:#1c1c1c;font-weight:400;"><span style="transform:scaleX(0.8828)">以下の方針で、機能ブロックの分割を行う。</span></span>
<span class="t" style="left:464px;top:226.00px;font-size:10.06px;color:#1c1c1c;font-weight:400;"><span style="transform:scaleX(0.8586)">・ドライバ、車両からの入力を種別毎に機能ブロックで段階的に抽象化し、サービスのコアとなる機能ブロックに提供する。</span></span>
<span class="t" style="left:464px;top:238.00px;font-size:10.06px;color:#1c1c1c;font-weight:400;"><span style="transform:scaleX(0.8779)">・サービスからの出力は、種別に応じて段階的に具象化して外部へ出力する。</span></span>
<div style="left:223.5px;top:261.5px;width:785.5px;height:20.5px;background:#eff6fa;"></div>
<div style="left:223.5px;top:261.5px;width:3.5px;height:20px;background:#7ab2f4;"></div>
<div style="left:1005.5px;top:261.5px;width:3.5px;height:20px;background:#7ab2f4;"></div>
<div style="left:227px;top:282px;width:779px;height:1px;background:#d9dbdd;"></div>
<span class="t" style="left:240.2px;top:264.90px;font-size:10.17px;color:#3d55b5;font-weight:400;line-height:16px;height:16px;"><span style="transform:scaleX(1.0331)">コンポーネント</span></span>
<div style="left:247px;top:291px;width:731px;height:76px;background:#ffffff;"></div>
<div style="left:247px;top:291px;width:731px;height:19px;background:#ebebeb;"></div>
<div style="left:247px;top:310px;width:28px;height:56px;background:#f7f7f7;"></div>
<div style="left:247px;top:291px;width:731px;height:1px;background:#c4c4c4;"></div>
<div style="left:247px;top:310px;width:731px;height:1px;background:#c4c4c4;"></div>
<div style="left:247px;top:329px;width:731px;height:1px;background:#c4c4c4;"></div>
<div style="left:247px;top:348px;width:731px;height:1px;background:#c4c4c4;"></div>
<div style="left:247px;top:366px;width:731px;height:1px;background:#c4c4c4;"></div>
<div style="left:247px;top:291px;width:1px;height:76px;background:#c4c4c4;"></div>
<div style="left:275px;top:291px;width:1px;height:76px;background:#c4c4c4;"></div>
<div style="left:977px;top:291px;width:1px;height:76px;background:#c4c4c4;"></div>
<span class="t" style="left:252.2px;top:296.20px;font-size:10.27px;color:#1c1c1c;font-weight:400;"><span style="transform:scaleX(0.9634)">No.</span></span>
<span class="t" style="left:279.6px;top:296.20px;font-size:10.27px;color:#1c1c1c;font-weight:400;"><span style="transform:scaleX(0.9254)">名前</span></span>
<span class="t" style="left:261.6px;top:315.00px;font-size:10.27px;color:#1c1c1c;font-weight:400;"><span style="transform:scaleX(0.9577)">1.</span></span>
<span class="t" style="left:278.8px;top:315.00px;font-size:10.27px;color:#1c1c1c;font-weight:400;"><span style="transform:scaleX(0.8053)">ACCコンポーネント</span></span>
<span class="t" style="left:261.6px;top:333.50px;font-size:10.27px;color:#1c1c1c;font-weight:400;"><span style="transform:scaleX(0.9577)">2.</span></span>
<span class="t" style="left:278.8px;top:333.50px;font-size:10.27px;color:#1c1c1c;font-weight:400;"><span style="transform:scaleX(0.8054)">エンジン制御コンポーネント</span></span>
<span class="t" style="left:261.6px;top:352.20px;font-size:10.27px;color:#1c1c1c;font-weight:400;"><span style="transform:scaleX(0.9577)">3.</span></span>
<span class="t" style="left:278.8px;top:352.20px;font-size:10.27px;color:#1c1c1c;font-weight:400;"><span style="transform:scaleX(0.8078)">ブレーキ制御コンポーネント</span></span>
<div style="left:234.2px;top:313px;width:4.2px;height:15px;background:#7db9f5;box-sizing:border-box;border:1px solid #5a6068;"></div>
<div style="left:234.2px;top:331.3px;width:4.2px;height:15px;background:#ffffff;box-sizing:border-box;border:1px solid #d6d6d6;"></div>
<div style="left:234.2px;top:349.8px;width:4.2px;height:15px;background:#ffffff;box-sizing:border-box;border:1px solid #d6d6d6;"></div>
<span class="t" style="left:241px;top:403.00px;font-size:10.17px;color:#3d55b5;font-weight:400;line-height:16px;height:16px;"><span style="transform:scaleX(1.0606)">インターフェース</span></span>
<div style="left:227px;top:420px;width:780px;height:1px;background:#d0d0d0;"></div>
<div style="left:247px;top:430px;width:731px;height:75px;background:#ffffff;"></div>
<div style="left:247px;top:430px;width:731px;height:19px;background:#ebebeb;"></div>
<div style="left:247px;top:449px;width:28px;height:55px;background:#f7f7f7;"></div>
<div style="left:247px;top:430px;width:731px;height:1px;background:#c4c4c4;"></div>
<div style="left:247px;top:449px;width:731px;height:1px;background:#c4c4c4;"></div>
<div style="left:247px;top:467px;width:731px;height:1px;background:#c4c4c4;"></div>
<div style="left:247px;top:486px;width:731px;height:1px;background:#c4c4c4;"></div>
<div style="left:247px;top:504px;width:731px;height:1px;background:#c4c4c4;"></div>
<div style="left:247px;top:430px;width:1px;height:75px;background:#c4c4c4;"></div>
<div style="left:275px;top:430px;width:1px;height:75px;background:#c4c4c4;"></div>
<div style="left:977px;top:430px;width:1px;height:75px;background:#c4c4c4;"></div>
<span class="t" style="left:252.2px;top:434.60px;font-size:10.27px;color:#1c1c1c;font-weight:400;"><span style="transform:scaleX(0.9634)">No.</span></span>
<span class="t" style="left:279.6px;top:434.60px;font-size:10.27px;color:#1c1c1c;font-weight:400;"><span style="transform:scaleX(0.9254)">名前</span></span>
<span class="t" style="left:261.6px;top:453.40px;font-size:10.27px;color:#1c1c1c;font-weight:400;"><span style="transform:scaleX(0.9577)">1.</span></span>
<span class="t" style="left:278.8px;top:453.40px;font-size:10.27px;color:#1c1c1c;font-weight:400;"><span style="transform:scaleX(0.7991)">ACCインターフェース</span></span>
<span class="t" style="left:261.6px;top:471.90px;font-size:10.27px;color:#1c1c1c;font-weight:400;"><span style="transform:scaleX(0.9577)">2.</span></span>
<span class="t" style="left:278.8px;top:471.90px;font-size:10.27px;color:#1c1c1c;font-weight:400;"><span style="transform:scaleX(0.7987)">エンジン制御インターフェース</span></span>
<span class="t" style="left:261.6px;top:490.60px;font-size:10.27px;color:#1c1c1c;font-weight:400;"><span style="transform:scaleX(0.9577)">3.</span></span>
<span class="t" style="left:278.8px;top:490.60px;font-size:10.27px;color:#1c1c1c;font-weight:400;"><span style="transform:scaleX(0.8047)">ブレーキ制御インターフェース</span></span>
<div style="left:1016px;top:423px;width:8px;height:23px;background:#ffffff;box-sizing:border-box;border:1px solid #d2d2d2;border-right:none;"></div>
<svg style="left:1018.5px;top:432px;" width="3" height="5" viewBox="0 0 3 5"><path d="M3 0v5l-3-2.5z" fill="#777"/></svg>
</div>
<div class="g status">
<div style="left:0px;top:745px;width:1024px;height:23px;background:#f3f3f3;"></div>
<div style="left:0px;top:745px;width:1024px;height:1px;background:#c6c6c6;"></div>
<div style="left:711.8px;top:749px;width:17.4px;height:16.5px;background:#c9c9c9;"></div>
<svg style="left:714.5px;top:752px;" width="13" height="11" viewBox="0 0 13 11"><rect x="0.6" y="0.6" width="11.4" height="9.4" fill="#fff" stroke="#5a5a5a" stroke-width="1.1"/><rect x="1" y="1" width="10.6" height="2" fill="#dce8f6"/><rect x="1" y="3" width="2.6" height="6.6" fill="#c9dcf3"/><path d="M0.6 3h11.4M3.8 3v7" stroke="#5a5a5a" stroke-width="0.9"/></svg>
<svg style="left:735.5px;top:752px;" width="13" height="11" viewBox="0 0 13 11"><rect x="0.6" y="0.6" width="11.4" height="9.4" fill="#fff" stroke="#5a5a5a" stroke-width="1.1"/><rect x="1.2" y="5.2" width="10.2" height="4.2" fill="#bcd5f3"/><path d="M0.6 5h11.4" stroke="#5a5a5a" stroke-width="0.9"/></svg>
<svg style="left:758.5px;top:752px;" width="13" height="11" viewBox="0 0 13 11"><rect x="0.6" y="0.6" width="11.4" height="9.4" fill="#fff" stroke="#5a5a5a" stroke-width="1.1"/><rect x="6.4" y="1.2" width="5" height="8.2" fill="#bcd5f3"/><path d="M6.2 0.6v9.4" stroke="#5a5a5a" stroke-width="0.9"/></svg>
<svg style="left:780.5px;top:751px;" width="14" height="13" viewBox="0 0 14 13"><path d="M1 4.6l5-3.6 5 3.4-5 3.6z" fill="#fff" stroke="#5a5a5a" stroke-width="0.9"/><path d="M2.4 7l3.6 2.4 4-2.8" fill="none" stroke="#5a5a5a" stroke-width="0.9"/><path d="M6 12l1.2-2.6 4.4-3.6 1.2 1.4-4.4 3.6z" fill="#fff" stroke="#5a5a5a" stroke-width="0.8"/></svg>
<svg style="left:803.5px;top:752px;" width="14" height="12" viewBox="0 0 14 12"><path d="M0.6 8.8v-8.2h11.4v4" fill="none" stroke="#5a5a5a" stroke-width="1.2"/><path d="M0.6 8.8h5" stroke="#5a5a5a" stroke-width="1.2"/><circle cx="9.6" cy="8.2" r="2.9" fill="#444"/><path d="M8.4 7l2.4 2.4M10.8 7l-2.4 2.4" stroke="#fff" stroke-width="0.7"/></svg>
<span class="t" style="left:828px;top:751.50px;font-size:10.27px;color:#4a4a4a;font-weight:400;"><span style="transform:scaleX(1.0280)">100%</span></span>
<div style="left:866.5px;top:757px;width:7px;height:1.6px;background:#4a4a4a;"></div>
<div style="left:881px;top:757.3px;width:80px;height:1px;background:#c2c2c2;"></div>
<div style="left:888.5px;top:751px;width:3px;height:12px;background:#3a3a3a;"></div>
<div style="left:968px;top:757px;width:7.4px;height:1.6px;background:#4a4a4a;"></div>
<div style="left:970.9px;top:754px;width:1.6px;height:7.4px;background:#4a4a4a;"></div>
<svg style="left:989.5px;top:752px;" width="11" height="11" viewBox="0 0 11 11"><path d="M5.5 0l2.2 2.6h-4.4zM5.5 11l2.2-2.6h-4.4zM0 5.5l2.6-2.2v4.4zM11 5.5l-2.6-2.2v4.4z" fill="#444"/><path d="M5.5 2v7M2 5.5h7" stroke="#444" stroke-width="1.2"/></svg>
<svg style="left:1012px;top:756px;" width="9" height="9" viewBox="0 0 9 9"><path d="M6 1h1.4M3.4 3.6h1.4M6 3.6h1.4M0.8 6.2h1.4M3.4 6.2h1.4M6 6.2h1.4" stroke="#bdbdbd" stroke-width="1.4"/></svg>
</div>
<div class="g ctxmenu">
<div style="left:402px;top:270px;width:188px;height:322px;background:#dedfe1;box-sizing:border-box;border:1px solid #aeafb1;box-shadow:inset 0 0 0 1px #e6e7e8;"></div>
<div style="left:403px;top:292px;width:186px;height:1px;background:#c9cacc;"></div>
<div style="left:403px;top:350px;width:186px;height:1px;background:#c9cacc;"></div>
<div style="left:403px;top:444px;width:186px;height:1px;background:#c9cacc;"></div>
<div style="left:403px;top:484px;width:186px;height:1px;background:#c9cacc;"></div>
<div style="left:403px;top:542px;width:186px;height:1px;background:#c9cacc;"></div>
<div style="left:403px;top:569px;width:186px;height:1px;background:#c9cacc;"></div>
<svg style="left:407.4px;top:277.3px;" width="11" height="10" viewBox="0 0 11 10"><path d="M0.8 0.8l9 8.6M9.8 0.8l-9 8.6" stroke="#e2aaa0" stroke-width="1.6" fill="none"/></svg>
<span class="t" style="left:422.8px;top:276.30px;font-size:10.49px;color:#b3b5b9;font-weight:400;"><span style="transform:scaleX(0.9569)">削除(D)</span></span>
<svg style="left:408px;top:297.5px;" width="10" height="11" viewBox="0 0 10 11"><path d="M2.5 0.5l4.2 7M7.3 0.5l-4.2 7" stroke="#b9bbbe" stroke-width="1" fill="none"/><circle cx="2.2" cy="8.6" r="1.7" fill="none" stroke="#b9bbbe" stroke-width="0.9"/><circle cx="7.6" cy="8.6" r="1.7" fill="none" stroke="#b9bbbe" stroke-width="0.9"/></svg>
<span class="t" style="left:422.8px;top:297.00px;font-size:10.49px;color:#b3b5b9;font-weight:400;"><span style="transform:scaleX(0.8685)">切り取り(T)</span></span>
<svg style="left:407.6px;top:315px;" width="11" height="12.5" viewBox="0 0 11 12.5"><rect x="3.6" y="0.6" width="6.2" height="7.4" rx="1" fill="#fff" stroke="#2b2b2b" stroke-width="1.1"/><rect x="0.6" y="3.6" width="6.4" height="8" rx="1" fill="#fff" stroke="#2b2b2b" stroke-width="1.1"/></svg>
<span class="t" style="left:422.8px;top:315.00px;font-size:10.49px;color:#101010;font-weight:500;"><span style="transform:scaleX(0.8025)">コピー(C)</span></span>
<svg style="left:407.6px;top:333.5px;" width="11" height="12" viewBox="0 0 11 12"><rect x="0.6" y="3.6" width="8.8" height="7.6" fill="none" stroke="#c0c2c5" stroke-width="1"/><path d="M3 3.5v-2.4h4v2.4" fill="none" stroke="#c0c2c5" stroke-width="1"/><rect x="1.8" y="6" width="3.6" height="4.4" fill="none" stroke="#c6c8cb" stroke-width="0.8"/></svg>
<span class="t" style="left:422.8px;top:333.80px;font-size:10.49px;color:#b3b5b9;font-weight:400;"><span style="transform:scaleX(0.8570)">貼り付け(P)</span></span>
<svg style="left:407.6px;top:355px;" width="11" height="11" viewBox="0 0 11 11"><path d="M2 0v4M0 2h4" stroke="#1f9a3c" stroke-width="1.3"/><path d="M3.2 6l4.2-2.4 3.2 1.6v2.6l-4.2 2.5-3.2-1.7z" fill="#44566e"/><path d="M3.6 6l3.8-2 2.6 1.3-3.8 2.1z" fill="#b9c6d8"/></svg>
<span class="t" style="left:422.8px;top:355.00px;font-size:10.49px;color:#101010;font-weight:500;"><span style="transform:scaleX(0.8267)">新しいフィールドを追加...</span></span>
<svg style="left:407.6px;top:372.5px;" width="11" height="11" viewBox="0 0 11 11"><path d="M2 0v4M0 2h4" stroke="#1f9a3c" stroke-width="1.3"/><path d="M3.2 6l4.2-2.4 3.2 1.6v2.6l-4.2 2.5-3.2-1.7z" fill="#44566e"/><path d="M3.6 6l3.8-2 2.6 1.3-3.8 2.1z" fill="#b9c6d8"/></svg>
<span class="t" style="left:422.8px;top:372.50px;font-size:10.49px;color:#101010;font-weight:500;"><span style="transform:scaleX(0.8498)">既存フィールドを追加...</span></span>
<svg style="left:409px;top:410.5px;" width="8" height="11" viewBox="0 0 8 11"><path d="M4 10.5v-9M0.8 4.6l3.2-3.4 3.2 3.4" fill="none" stroke="#222" stroke-width="1.5"/></svg>
<span class="t" style="left:423px;top:410.40px;font-size:10.49px;color:#101010;font-weight:500;"><span style="transform:scaleX(0.8493)">上に移動</span></span>
<svg style="left:409px;top:428px;" width="8" height="11" viewBox="0 0 8 11"><path d="M4 0.5v9M0.8 6.2l3.2 3.4 3.2-3.4" fill="none" stroke="#222" stroke-width="1.5"/></svg>
<span class="t" style="left:423px;top:427.60px;font-size:10.49px;color:#101010;font-weight:500;"><span style="transform:scaleX(0.8493)">下に移動</span></span>
<div style="left:396.6px;top:381.7px;width:199.4px;height:31.5px;box-sizing:border-box;border:4px solid #fb2d6c;border-radius:7px;background:#d3d4d6;box-shadow:1px 2px 4px rgba(0,0,0,.25);"></div>
<div style="left:403.6px;top:388.3px;width:183.6px;height:18.3px;background:#c4d5ee;box-sizing:border-box;border:1px solid #4d7ec9;"></div>
<svg style="left:407.4px;top:392.3px;" width="11" height="11" viewBox="0 0 11 11"><path d="M0.8 0.8l9 9M9.8 0.8l-9 9" stroke="#bf361a" stroke-width="1.9" fill="none"/></svg>
<span class="t" style="left:422.4px;top:391.50px;font-size:10.49px;color:#000;font-weight:500;"><span style="transform:scaleX(0.8009)">このフィールドを非表示</span></span>
<svg style="left:407.4px;top:449.5px;" width="12" height="11" viewBox="0 0 12 11"><rect x="2.6" y="2.6" width="8" height="7.6" rx="1" fill="none" stroke="#c3c6cc" stroke-width="0.9"/><path d="M0.8 4.6v-2h4" fill="none" stroke="#c6b9dc" stroke-width="1.1"/><path d="M3.6 0.6l2 2-2 2" fill="none" stroke="#c6b9dc" stroke-width="1"/></svg>
<span class="t" style="left:422.8px;top:449.00px;font-size:10.49px;color:#b3b5b9;font-weight:400;"><span style="transform:scaleX(0.8195)">表示フォームの変更はできません</span></span>
<svg style="left:407.4px;top:468px;" width="12" height="11" viewBox="0 0 12 11"><rect x="2.6" y="2.6" width="8" height="7.6" rx="1" fill="none" stroke="#c3c6cc" stroke-width="0.9"/><path d="M0.8 4.6v-2h4" fill="none" stroke="#c6b9dc" stroke-width="1.1"/><path d="M3.6 0.6l2 2-2 2" fill="none" stroke="#c6b9dc" stroke-width="1"/></svg>
<span class="t" style="left:422.8px;top:467.30px;font-size:10.49px;color:#b3b5b9;font-weight:400;"><span style="transform:scaleX(0.8260)">表示フォームを元に戻す</span></span>
<svg style="left:407px;top:488.5px;" width="12" height="12" viewBox="0 0 12 12"><rect x="1" y="2" width="10" height="9.4" rx="1" fill="#e9ebee" stroke="#c3c6cc" stroke-width="0.9"/><path d="M0.8 4.4v-2h3.6" fill="none" stroke="#b7cde8" stroke-width="1.1"/><path d="M3.4 0.6l1.8 1.8-1.8 1.8" fill="none" stroke="#b7cde8" stroke-width="1"/><path d="M5 10v-4l1.6 2.6 1.6-2.6v4" fill="none" stroke="#b7cde8" stroke-width="0.9"/></svg>
<span class="t" style="left:422.8px;top:489.00px;font-size:10.49px;color:#b3b5b9;font-weight:400;"><span style="transform:scaleX(0.8164)">メインエディタで表示(M)</span></span>
<svg style="left:407px;top:506.5px;" width="12" height="12" viewBox="0 0 12 12"><rect x="0.8" y="1.8" width="10.6" height="9.6" rx="1.2" fill="#fff" stroke="#333" stroke-width="1.1"/><rect x="0" y="0" width="6" height="5" fill="#fff"/><path d="M1 5v-2.4h3.6" fill="none" stroke="#1d62b8" stroke-width="1.3"/><path d="M3.4 0.4l2.2 2.2-2.2 2.2z" fill="#1d62b8"/><text x="5.6" y="10.2" font-size="6.5" font-weight="700" fill="#1d62b8" font-family="Liberation Sans,sans-serif">S</text></svg>
<span class="t" style="left:422.8px;top:507.00px;font-size:10.49px;color:#101010;font-weight:500;"><span style="transform:scaleX(0.8291)">サブエディタで表示(S)</span></span>
<svg style="left:407px;top:525px;" width="12" height="12" viewBox="0 0 12 12"><rect x="0.5" y="0.8" width="3.4" height="2.6" fill="none" stroke="#444" stroke-width="0.9"/><path d="M3.9 2.1h2.4v3" fill="none" stroke="#444" stroke-width="0.8"/><path d="M0.4 7.4h4" stroke="#1d62b8" stroke-width="1.4"/><path d="M3.2 5l2.6 2.4-2.6 2.4z" fill="#1d62b8"/><circle cx="8.6" cy="5.2" r="1.5" fill="none" stroke="#333" stroke-width="0.9"/><circle cx="8.6" cy="9" r="1.5" fill="none" stroke="#333" stroke-width="0.9"/></svg>
<span class="t" style="left:422.8px;top:524.80px;font-size:10.49px;color:#101010;font-weight:500;"><span style="transform:scaleX(0.8377)">トレースツリーで表示(V)</span></span>
<span class="t" style="left:406.2px;top:550.00px;font-size:10.49px;color:#101010;font-weight:500;"><span style="transform:scaleX(0.7970)">タイプ :</span></span>
<div style="left:441px;top:547px;width:143.5px;height:17px;background:#efefef;box-sizing:border-box;border:1px solid #b8b8b8;"></div>
<svg style="left:443.3px;top:549.3px;" width="13" height="13" viewBox="0 0 13 13"><rect x="0.5" y="0.5" width="12" height="11.4" fill="#fff" stroke="#587aa0"/><rect x="2.3" y="7" width="3.4" height="2.8" rx="0.8" fill="none" stroke="#4b6c93" stroke-width="0.9"/><circle cx="9.3" cy="3.2" r="1.3" fill="none" stroke="#4b6c93" stroke-width="0.9"/><path d="M5.7 8.4h3.6v-4" fill="none" stroke="#4b6c93" stroke-width="0.9"/></svg>
<span class="t" style="left:460px;top:550.00px;font-size:10.49px;color:#a2a2a2;font-weight:400;"><span style="transform:scaleX(0.7927)">コンポーネント構造モデル</span></span>
<svg style="left:573.7px;top:554px;" width="6" height="4" viewBox="0 0 6 4"><path d="M0 0h6l-3 3.4z" fill="#6a6a6a"/></svg>
<svg style="left:406.5px;top:573.5px;" width="13" height="12" viewBox="0 0 13 12"><path d="M1 4.6l5-3.6 5 3.4-5 3.6z" fill="none" stroke="#c5c8cd" stroke-width="0.9"/><path d="M3 7.4l3 2 4.4-3.2" fill="none" stroke="#c5c8cd" stroke-width="0.9"/><path d="M5 11l1.2-2.4 4.2-3.4 1 1.2-4.2 3.4z" fill="#e6d3b6"/></svg>
<span class="t" style="left:422.4px;top:573.60px;font-size:10.49px;color:#b3b5b9;font-weight:400;"><span style="transform:scaleX(0.8126)">プロパティ(R)</span></span>
<svg style="left:504px;top:402.5px;" width="12" height="17" viewBox="0 0 12 17"><path d="M0.6 0.6v12.4l2.9-2.7 2.1 4.9 2-0.9-2.1-4.8h4z" fill="#fff" stroke="#111" stroke-width="0.9" stroke-linejoin="round"/></svg>
</div>
<div style="left:0px;top:0px;width:1px;height:768px;background:#2f5fa8;"></div>
<div style="left:1023px;top:0px;width:1px;height:768px;background:#2f5fa8;"></div>
<div style="left:0px;top:767px;width:1024px;height:1px;background:#2f5fa8;"></div>
</div></body></html>
